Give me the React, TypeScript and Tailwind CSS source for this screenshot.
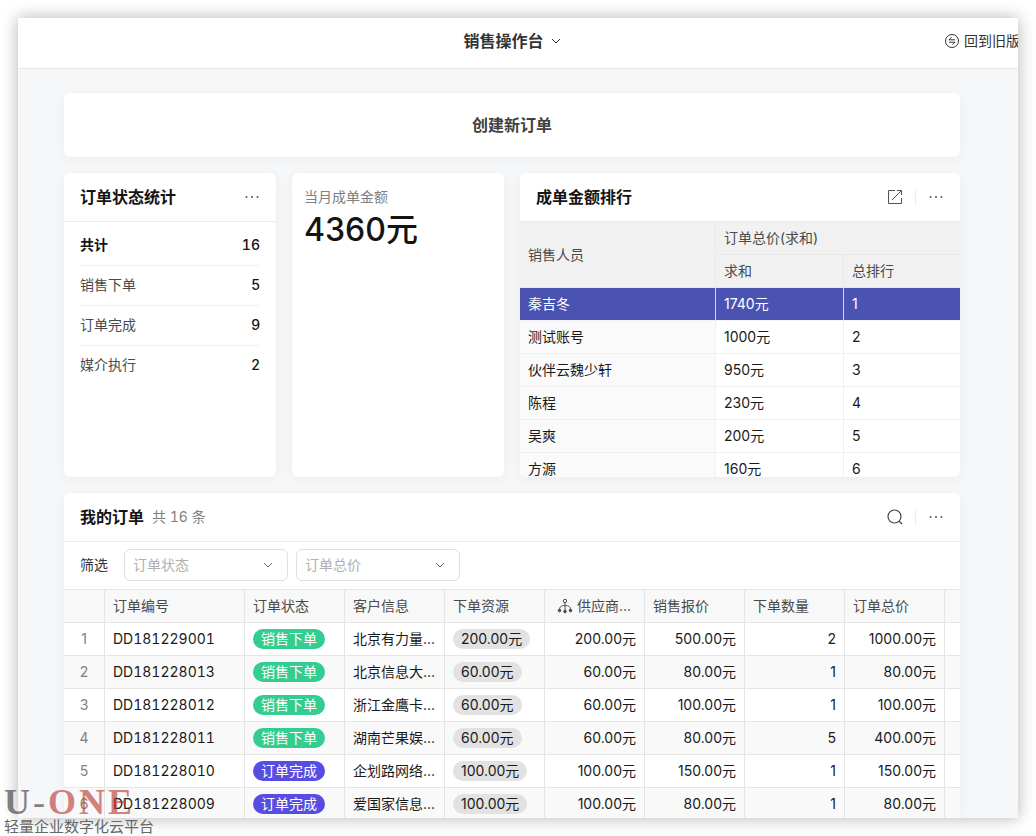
import React from "react";

type Order = {
  no: string;
  status: string;
  client: string;
  resource: string;
  supplier: string;
  quote: string;
  count: number;
  total: string;
};

const stats = [
  { label: "销售下单", value: 5 },
  { label: "订单完成", value: 9 },
  { label: "媒介执行", value: 2 },
];

const ranking = [
  { name: "秦吉冬", sum: "1740元" },
  { name: "测试账号", sum: "1000元" },
  { name: "伙伴云魏少轩", sum: "950元" },
  { name: "陈程", sum: "230元" },
  { name: "吴爽", sum: "200元" },
  { name: "方源", sum: "160元" },
];

const orders: Order[] = [
  { no: "DD181229001", status: "销售下单", client: "北京有力量...", resource: "200.00元", supplier: "200.00元", quote: "500.00元", count: 2, total: "1000.00元" },
  { no: "DD181228013", status: "销售下单", client: "北京信息大...", resource: "60.00元", supplier: "60.00元", quote: "80.00元", count: 1, total: "80.00元" },
  { no: "DD181228012", status: "销售下单", client: "浙江金鹰卡...", resource: "60.00元", supplier: "60.00元", quote: "100.00元", count: 1, total: "100.00元" },
  { no: "DD181228011", status: "销售下单", client: "湖南芒果娱...", resource: "60.00元", supplier: "60.00元", quote: "80.00元", count: 5, total: "400.00元" },
  { no: "DD181228010", status: "订单完成", client: "企划路网络...", resource: "100.00元", supplier: "100.00元", quote: "150.00元", count: 1, total: "150.00元" },
  { no: "DD181228009", status: "订单完成", client: "爱国家信息...", resource: "100.00元", supplier: "100.00元", quote: "80.00元", count: 1, total: "80.00元" },
];

const ChevronIcon: React.FC<{ className?: string }> = ({ className }) => (
  <svg className={className} width="10" height="10" viewBox="0 0 10 10" fill="none" stroke="currentColor">
    <path d="M1 3l4 4 4-4" />
  </svg>
);

const MoreButton: React.FC = () => (
  <button type="button" aria-label="更多" className="text-[#555]">
    <svg width="16" height="16" viewBox="0 0 16 16" fill="currentColor">
      <circle cx="2.5" cy="8" r="1" />
      <circle cx="8" cy="8" r="1" />
      <circle cx="13.5" cy="8" r="1" />
    </svg>
  </button>
);

const Card: React.FC<{ className?: string; children: React.ReactNode }> = ({ className = "", children }) => (
  <section className={`overflow-hidden rounded-md bg-white shadow-[0_2px_12px_rgba(0,0,0,0.05)] ${className}`}>
    {children}
  </section>
);

const CardHeader: React.FC<{ title: string; note?: string; children?: React.ReactNode }> = ({ title, note, children }) => (
  <div className="flex h-[49px] items-center border-b border-[#ececec] px-4">
    <h2 className="text-base font-semibold text-[#141414]">{title}</h2>
    {note && <span className="ml-2 text-sm text-[#808080] tabular-nums">{note}</span>}
    <div className="ml-auto flex items-center">
      {children}
      <MoreButton />
    </div>
  </div>
);

const Divider = () => <span className="mx-3 h-4 w-px bg-[#ececec]" />;

const FilterSelect: React.FC<{ label: string }> = ({ label }) => (
  <div className="relative">
    <select
      aria-label={label}
      className="h-8 w-[164px] appearance-none rounded-md border border-[#e0e0e0] bg-white px-2 text-sm text-[#b0b0b0]"
    >
      <option>{label}</option>
    </select>
    <ChevronIcon className="pointer-events-none absolute top-[11px] right-[15px] text-[#666]" />
  </div>
);

const RankingTable: React.FC = () => {
  const th = "h-[33px] border-b border-[#e8e8e8] px-2 text-left font-normal";

  return (
    <table className="w-full table-fixed border-separate border-spacing-0 text-sm">
      <colgroup>
        <col className="w-[196px]" />
        <col className="w-32" />
        <col />
      </colgroup>
      <thead className="bg-[#f1f1f1] text-[#4a4a4a]">
        <tr>
          <th rowSpan={2} className={`${th} border-r`}>销售人员</th>
          <th colSpan={2} className={th}>订单总价(求和)</th>
        </tr>
        <tr>
          <th className={`${th} border-r`}>求和</th>
          <th className={th}>总排行</th>
        </tr>
      </thead>
      <tbody>
        {ranking.map((row, i) => {
          const active = i === 0;
          const td = `h-[33px] border-b px-2 ${
            active ? "border-b-[#f4f4fb] border-r-[#d5d7f0] bg-[#4a52b2] text-white" : "border-[#f0f0f0] text-[#1a1a1a]"
          }`;
          return (
            <tr key={row.name}>
              <td className={`${td} border-r ${active ? "" : "bg-[#fafafa]"}`}>{row.name}</td>
              <td className={`${td} border-r`}>{row.sum}</td>
              <td className={td}>{i + 1}</td>
            </tr>
          );
        })}
      </tbody>
    </table>
  );
};

const OrdersTable: React.FC = () => {
  const cell = "h-[33px] border-b border-r border-[#e5e5e5] px-2 whitespace-nowrap";
  const th = `${cell} text-left font-normal`;

  return (
    <table className="w-full table-fixed border-separate border-spacing-0 text-sm">
      <colgroup>
        <col className="w-[41px]" />
        <col className="w-[140px]" />
        <col className="w-[100px]" />
        <col className="w-[100px]" />
        <col className="w-[100px]" />
        <col className="w-[100px]" />
        <col className="w-[100px]" />
        <col className="w-[100px]" />
        <col className="w-[100px]" />
        <col />
      </colgroup>
      <thead className="bg-[#f8f8f8] text-[#4a4a4a]">
        <tr>
          <th className={th} />
          <th className={th}>订单编号</th>
          <th className={th}>订单状态</th>
          <th className={th}>客户信息</th>
          <th className={th}>下单资源</th>
          <th className={th}>
            <div className="flex items-center gap-1 pl-1">
              <svg className="shrink-0" width="16" height="16" viewBox="0 0 16 16" fill="none" stroke="currentColor">
                <circle cx="8" cy="3" r="1.7" />
                <path d="M8 4.700v8M2.500 11.500C2.500 9 4 7.500 8 7.500s5.500 1.500 5.500 4" />
                <circle cx="2.500" cy="12.500" r="1.300" fill="currentColor" />
                <circle cx="8" cy="13.500" r="1.300" fill="currentColor" />
                <circle cx="13.500" cy="12.500" r="1.300" fill="currentColor" />
              </svg>
              <span>供应商...</span>
            </div>
          </th>
          <th className={th}>销售报价</th>
          <th className={th}>下单数量</th>
          <th className={th}>订单总价</th>
          <th className="border-b border-[#e5e5e5]" />
        </tr>
      </thead>
      <tbody className="text-[#1a1a1a]">
        {orders.map((order, i) => (
          <tr key={order.no} className="even:bg-[#f9f9f9]">
            <td className={`${cell} text-center text-[#808080]`}>{i + 1}</td>
            <td className={`${cell} tabular-nums`}>{order.no}</td>
            <td className={cell}>
              <span
                className={`inline-block rounded-full px-2 align-top text-white ${
                  order.status === "订单完成" ? "bg-[#574de2]" : "bg-[#34cd91]"
                }`}
              >
                {order.status}
              </span>
            </td>
            <td className={cell}>{order.client}</td>
            <td className={cell}>
              <span className="inline-block rounded-full bg-[#e2e2e2] px-2 align-top">{order.resource}</span>
            </td>
            <td className={`${cell} text-right`}>{order.supplier}</td>
            <td className={`${cell} text-right`}>{order.quote}</td>
            <td className={`${cell} text-right`}>{order.count}</td>
            <td className={`${cell} text-right`}>{order.total}</td>
            <td className="border-b border-[#e5e5e5]" />
          </tr>
        ))}
      </tbody>
    </table>
  );
};

const Watermark: React.FC = () => (
  <div className="pointer-events-none absolute bottom-0 left-1 flex flex-col">
    <div className="flex gap-[3px] font-['Liberation_Serif',serif] text-4xl leading-8 font-bold opacity-60">
      <span className="text-[#333]">U</span>
      <span className="font-normal text-[#333]">-</span>
      <span className="text-[#b5302c]">O</span>
      <span className="text-[#b5302c]">N</span>
      <span className="text-[#b5302c]">E</span>
    </div>
    <span className="text-[15px] leading-[18px] text-[#666]">轻量企业数字化云平台</span>
  </div>
);

const App: React.FC = () => {
  return (
    <div className="relative flex h-screen overflow-hidden bg-white p-[18px] font-[Inter,'Noto_Sans_CJK_SC',sans-serif]">
      <div className="flex-1 overflow-hidden bg-[#f6f7f9] shadow-[0_0_16px_rgba(0,0,0,0.3)]">
        <header className="grid h-[51px] grid-cols-[1fr_auto_1fr] items-center border-b border-[#e6e8eb] bg-white pr-3 pb-1 text-[#333]">
          <button type="button" className="col-start-2 flex items-center gap-[7px] text-base font-semibold">
            销售操作台
            <ChevronIcon />
          </button>
          <a href="#old" className="-mr-[14px] flex items-center gap-1 justify-self-end text-sm whitespace-nowrap">
            <svg width="16" height="16" viewBox="0 0 16 16" fill="none" stroke="currentColor">
              <circle cx="8" cy="8" r="6.5" />
              <path d="M11 6.800H5l2.500-2.500M5 9.200h6l-2.500 2.500" />
            </svg>
            回到旧版
          </a>
        </header>

        <main className="grid grid-cols-4 gap-4 pt-6 pr-[58px] pl-[46px]">
          <Card className="col-span-4">
            <button type="button" className="h-16 w-full text-base font-semibold text-[#404040]">
              创建新订单
            </button>
          </Card>

          <Card className="h-[304px]">
            <CardHeader title="订单状态统计" />
            <dl className="mx-4 divide-y divide-[#f0f0f0] pt-1 text-sm text-[#141414]">
              <div className="flex h-10 items-center justify-between pb-0.5 font-semibold">
                <dt>共计</dt>
                <dd className="font-medium tabular-nums">16</dd>
              </div>
              {stats.map((item) => (
                <div key={item.label} className="flex h-10 items-center justify-between pb-0.5">
                  <dt className="text-[#4a4a4a]">{item.label}</dt>
                  <dd className="font-medium">{item.value}</dd>
                </div>
              ))}
            </dl>
          </Card>

          <Card className="h-[304px] px-3 py-[14px]">
            <p className="text-sm text-[#808080]">当月成单金额</p>
            <p className="text-[32px] leading-[46px] font-medium text-[#141414]">4360元</p>
          </Card>

          <Card className="col-span-2 h-[304px]">
            <CardHeader title="成单金额排行">
              <button type="button" aria-label="展开" className="text-[#555]">
                <svg width="16" height="16" viewBox="0 0 16 16" fill="none" stroke="currentColor">
                  <path d="M8 1.500H1.500v13h13V9M10 1.500h4.500V6M14.500 1.500L5 11" />
                </svg>
              </button>
              <Divider />
            </CardHeader>
            <RankingTable />
          </Card>

          <Card className="col-span-4">
            <CardHeader title="我的订单" note="共 16 条">
              <button type="button" aria-label="搜索" className="text-[#444]">
                <svg width="16" height="16" viewBox="0 0 16 16" fill="none" stroke="currentColor" strokeWidth="1.2">
                  <circle cx="7.500" cy="7.500" r="6.500" />
                  <path d="M12 12l3 3" />
                </svg>
              </button>
              <Divider />
            </CardHeader>
            <div className="flex h-12 items-center gap-2 border-b border-[#e5e5e5] px-4 pb-0.5">
              <span className="mr-2 text-sm text-[#333]">筛选</span>
              <FilterSelect label="订单状态" />
              <FilterSelect label="订单总价" />
            </div>
            <OrdersTable />
          </Card>
        </main>
      </div>
      <Watermark />
    </div>
  );
};

export default App;
